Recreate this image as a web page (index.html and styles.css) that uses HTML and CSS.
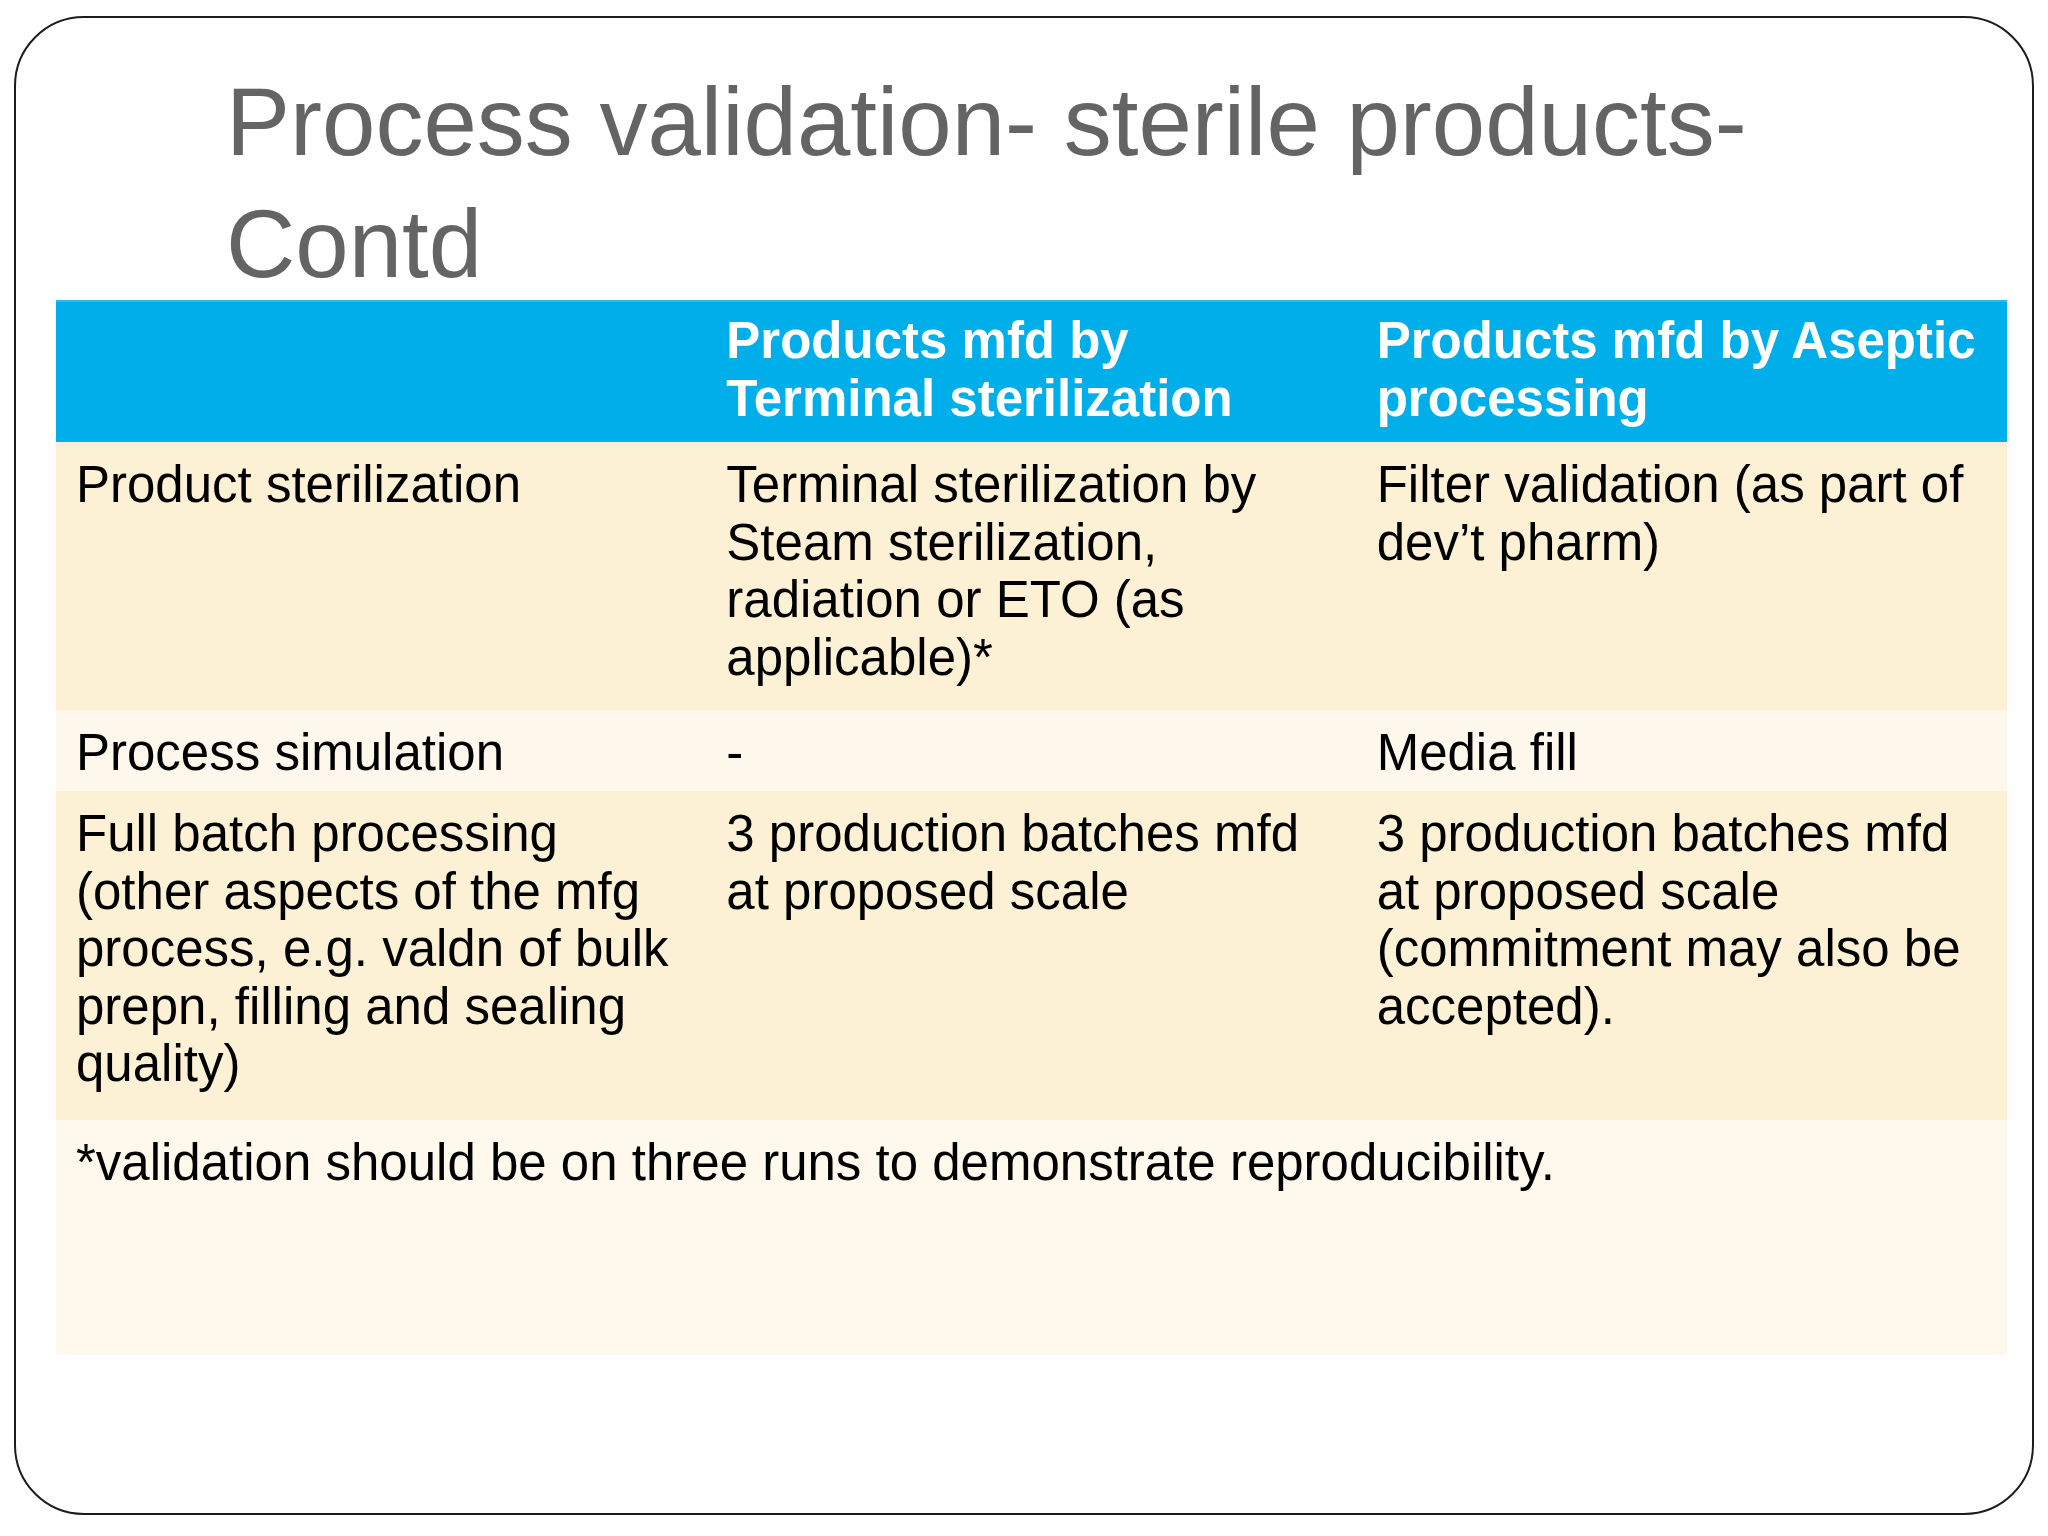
FILE: index.html
```html
<!DOCTYPE html>
<html lang="en">
<head>
<meta charset="utf-8">
<title>Process validation- sterile products- Contd</title>
<link rel="stylesheet" href="styles.css">
</head>
<body>
<div class="slide">
  <h1 class="title">Process validation- sterile products-<br>Contd</h1>
  <table class="grid">
    <colgroup><col class="c"><col class="c"><col class="c"></colgroup>
    <thead>
      <tr class="head">
        <th></th>
        <th>Products mfd by<br>Terminal sterilization</th>
        <th>Products mfd by Aseptic<br>processing</th>
      </tr>
    </thead>
    <tbody>
      <tr class="row r1">
        <td>Product sterilization</td>
        <td>Terminal sterilization by<br>Steam sterilization,<br>radiation or ETO (as<br>applicable)*</td>
        <td>Filter validation (as part of<br>dev’t pharm)</td>
      </tr>
      <tr class="row r2">
        <td>Process simulation</td>
        <td>-</td>
        <td>Media fill</td>
      </tr>
      <tr class="row r3">
        <td>Full batch processing<br>(other aspects of the mfg<br>process, e.g. valdn of bulk<br>prepn, filling and sealing<br>quality)</td>
        <td>3 production batches mfd<br>at proposed scale</td>
        <td>3 production batches mfd<br>at proposed scale<br>(commitment may also be<br>accepted).</td>
      </tr>
      <tr class="row r4">
        <td colspan="3">*validation should be on three runs to demonstrate reproducibility.</td>
      </tr>
    </tbody>
  </table>
</div>
</body>
</html>
```
FILE: styles.css
```css
html, body {
  margin: 0;
  padding: 0;
  background: #ffffff;
}
body {
  width: 2048px;
  height: 1536px;
  padding: 16px 14px 0 14px;
  box-sizing: border-box;
  font-family: "Liberation Sans", Arial, sans-serif;
}
.slide {
  width: 2020px;
  height: 1499px;
  box-sizing: border-box;
  border: 2px solid #1c1c1c;
  border-radius: 70px;
  background: #fefefe;
  display: flex;
  flex-direction: column;
}
.title {
  margin: 0;
  box-sizing: border-box;
  height: 282px;
  padding: 43px 0 0 210px;
  font-weight: normal;
  font-size: 96px;
  line-height: 122px;
  color: #646464;
  white-space: nowrap;
}
.grid {
  margin-left: 40px;
  width: 1951px;
  border-collapse: collapse;
  table-layout: fixed;
  font-size: 51px;
  line-height: 57.5px;
}
.grid .c { width: 650px; }
.grid th, .grid td {
  text-align: left;
  vertical-align: top;
  padding: 12px 16px 0 20px;
  white-space: nowrap;
}
.head th {
  background: #00aeea;
  color: #ffffff;
  font-weight: bold;
  height: 141px;
  box-sizing: border-box;
  border-top: 2px solid #2db9ee;
  padding-top: 10px;
}
.row td { color: #000000; padding-top: 14px; box-sizing: border-box; }
.r1 td { background: #fcf0d5; height: 268px; }
.r2 td { background: #fdf8eb; height: 81px; }
.r3 td { background: #fcf0d5; height: 329px; }
.r4 td { background: #fef9ec; height: 235px; }
```
